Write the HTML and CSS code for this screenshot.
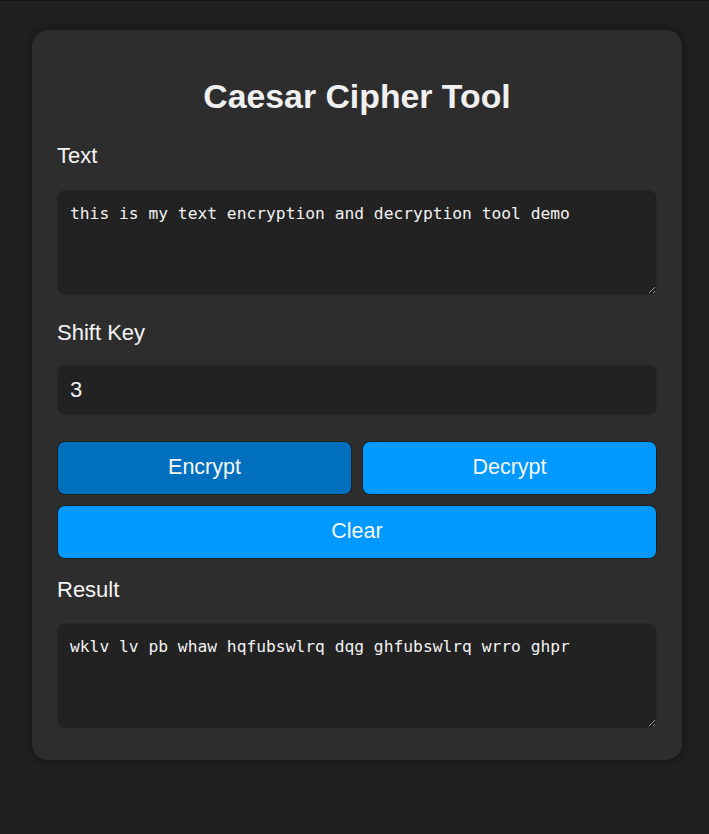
FILE: index.html
```html
<!DOCTYPE html>
<html lang="en">
<head>
<meta charset="utf-8">
<title>Caesar Cipher Tool</title>
<link rel="stylesheet" href="styles.css">
</head>
<body>
<main class="card">
  <h1 class="title">Caesar Cipher Tool</h1>
  <label class="label label-first" for="text">Text</label>
  <textarea id="text" class="area">this is my text encryption and decryption tool demo</textarea>
  <label class="label label-shift" for="shift">Shift Key</label>
  <input id="shift" class="field" type="number" value="3">
  <div class="btn-row">
    <button class="btn btn-active">Encrypt</button>
    <button class="btn">Decrypt</button>
  </div>
  <button class="btn btn-wide">Clear</button>
  <label class="label label-result" for="result">Result</label>
  <textarea id="result" class="area" readonly>wklv lv pb whaw hqfubswlrq dqg ghfubswlrq wrro ghpr</textarea>
</main>
</body>
</html>
```

FILE: styles.css
```css
html, body {
  margin: 0;
  padding: 0;
}
body {
  background: #202020;
  border-top: 1px solid #151515;
  min-height: 833px;
  padding: 29px 0 0 32px;
  box-sizing: border-box;
  font-family: "Liberation Sans", Arial, sans-serif;
  color: #f2f2f2;
}
.card {
  width: 650px;
  box-sizing: border-box;
  background: #2d2d2d;
  border-radius: 16px;
  box-shadow: 0 0 14px rgba(0, 0, 0, 0.45);
  padding: 25px 25px 32px;
  display: flex;
  flex-direction: column;
}
.title {
  margin: 23px 0 27px;
  text-align: center;
  font-size: 33.8px;
  font-weight: bold;
  line-height: 37.5px;
  color: #f0f0f0;
}
.label {
  display: block;
  font-size: 22px;
  line-height: 25px;
  margin: 25px 0 22px;
  color: #f4f4f4;
}
.label-first {
  margin-top: 0;
}
.label-shift {
  margin-bottom: 20px;
}
.label-result {
  margin-top: 18px;
  margin-bottom: 21px;
}
.area {
  display: block;
  box-sizing: border-box;
  width: 600px;
  height: 105px;
  margin: 0;
  padding: 12px 12px;
  background: #222222;
  border: 1px solid #262626;
  border-radius: 8px;
  color: #f2f2f2;
  font-family: "DejaVu Sans Mono", "Liberation Mono", monospace;
  font-size: 16.3px;
  line-height: 21px;
  outline: none;
  resize: vertical;
}
.field {
  display: block;
  box-sizing: border-box;
  width: 600px;
  height: 50px;
  margin: 0;
  padding: 0 12px;
  background: #222222;
  border: 1px solid #262626;
  border-radius: 8px;
  color: #f2f2f2;
  font-family: "Liberation Sans", Arial, sans-serif;
  font-size: 22px;
  outline: none;
  -moz-appearance: textfield;
}
.field::-webkit-inner-spin-button,
.field::-webkit-outer-spin-button {
  -webkit-appearance: none;
  margin: 0;
}
.btn-row {
  display: flex;
  gap: 10px;
  margin-top: 26px;
}
.btn {
  flex: 1;
  height: 54px;
  margin: 0;
  border: 1px solid #1f1f1f;
  border-radius: 8px;
  background: #0099ff;
  color: #f6f6f6;
  font-family: "Liberation Sans", Arial, sans-serif;
  font-size: 21.5px;
  cursor: pointer;
}
.btn-active {
  background: #006fbd;
}
.btn-wide {
  display: block;
  width: 600px;
  flex: none;
  margin-top: 10px;
}
```
